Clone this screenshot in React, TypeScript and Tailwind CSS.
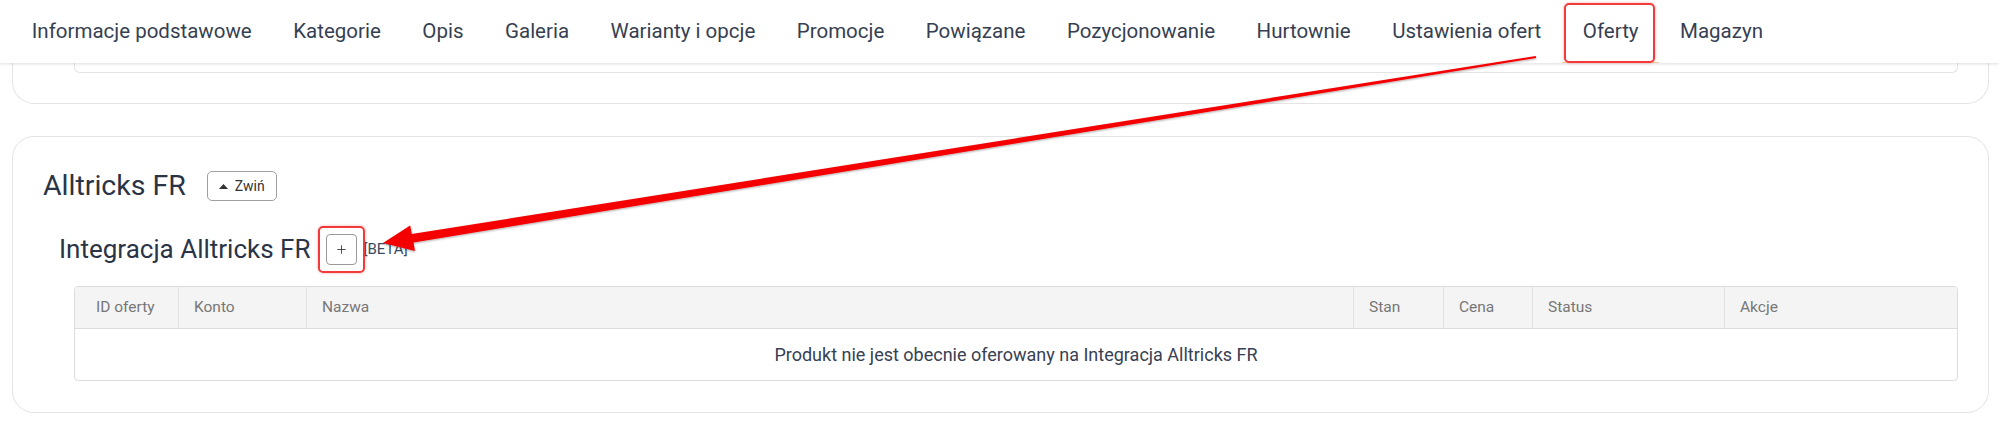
import { Plus } from 'lucide-react';

const TABS = [
  'Informacje podstawowe',
  'Kategorie',
  'Opis',
  'Galeria',
  'Warianty i opcje',
  'Promocje',
  'Powiązane',
  'Pozycjonowanie',
  'Hurtownie',
  'Ustawienia ofert',
  'Oferty',
  'Magazyn',
];

const COLUMNS = ['ID oferty', 'Konto', 'Nazwa', 'Stan', 'Cena', 'Status', 'Akcje'];

// annotation arrow, from the "Oferty" tab down to the + button
function Arrow() {
  return (
    <svg
      className="pointer-events-none absolute left-0 top-0 z-20"
      width={1999}
      height={423}
      viewBox="0 0 1999 423"
    >
      <defs>
        <filter id="arrowShadow" x="-5%" y="-20%" width="110%" height="140%">
          <feDropShadow dx="0" dy="1" stdDeviation="1.2" floodColor="#000" floodOpacity="0.35" />
        </filter>
      </defs>
      <polygon
        filter="url(#arrowShadow)"
        fill="#f50000"
        points="383,243 415,251 413.5,242.5 1536.3,58 1535.7,56 411.8,234 410.2,225.5"
      />
    </svg>
  );
}

export default function App() {
  return (
    <div className="relative h-[423px] w-[1999px] overflow-hidden bg-white font-[Roboto,sans-serif]">
      <nav className="relative z-10 flex h-[63px] items-center bg-white pl-[11px] shadow-[0_1px_3px_rgba(0,0,0,0.13)]">
        {TABS.map(tab => (
          <div key={tab} className="relative flex h-full items-center px-[20.75px] text-[20.5px] text-[#363f52]">
            {tab}
            {tab === 'Oferty' && (
              <>
                <span className="absolute bottom-0 left-0 right-0 h-px bg-[#f2c9a2]" />
                <span className="absolute bottom-0 left-[2px] right-[4px] top-[3px] rounded-[5px] border-2 border-[#f23a3a] shadow-[0_0_3px_rgba(240,0,0,0.35)]" />
              </>
            )}
          </div>
        ))}
      </nav>

      {/* previous card, scrolled mostly under the nav */}
      <div className="ml-3 mr-[10px] h-[41px] rounded-b-[22px] border-x border-b border-[#e4e4e4]">
        <div className="ml-[61px] mr-[30px] h-[10px] rounded-b-md border-x border-b border-[#e4e4e4]" />
      </div>

      <div className="ml-3 mr-[10px] mt-[32px] rounded-[22px] border border-[#e4e4e4] px-[30px] pb-[31px] pt-[31px]">
        <div className="flex h-[36px] items-center gap-[21px]">
          <h2 className="text-[28.5px] leading-none text-[#2a3446]">Alltricks FR</h2>
          <button className="flex h-[30px] w-[70px] items-center gap-[7px] rounded-[5px] border border-[#a0a0a0] pl-[11px] text-[14px] text-[#333]">
            <svg width="9" height="5" viewBox="0 0 9 5">
              <path d="M0 5 L4.5 0 L9 5 Z" fill="#333" />
            </svg>
            Zwiń
          </button>
        </div>

        <div className="mt-[27px] flex h-[36px] items-center pl-4">
          <h3 className="text-[26px] leading-none text-[#2a3446]">Integracja Alltricks FR</h3>
          <button className="relative ml-[16px] flex h-[31px] w-[31px] items-center justify-center rounded-[4px] border border-[#9a9a9a] text-[#333]">
            <Plus size={13} strokeWidth={1.6} />
            <span className="absolute -bottom-[9px] -left-[9px] -right-[9px] -top-[9px] rounded-[5px] border-2 border-[#f23a3a] shadow-[0_0_3px_rgba(240,0,0,0.35)]" />
          </button>
          <span className="ml-[6px] text-[15px] text-[#3b4a5e]">[BETA]</span>
        </div>

        <div className="ml-[31px] mt-[19px] overflow-hidden rounded-[4px] border border-[#dcdcdc]">
          <div className="grid h-[42px] grid-cols-[103px_128px_1fr_90px_89px_192px_233px] border-b border-[#dcdcdc] bg-[#f4f4f4] text-[15.5px] text-[#777]">
            {COLUMNS.map((col, i) => (
              <div
                key={col}
                className={`flex items-center ${i === 0 ? 'pl-[21px]' : 'border-l border-[#e2e2e2] pl-[15px]'}`}
              >
                {col}
              </div>
            ))}
          </div>
          <div className="flex h-[51px] items-center justify-center text-[18px] text-[#374152]">
            Produkt nie jest obecnie oferowany na Integracja Alltricks FR
          </div>
        </div>
      </div>

      <Arrow />
    </div>
  );
}
